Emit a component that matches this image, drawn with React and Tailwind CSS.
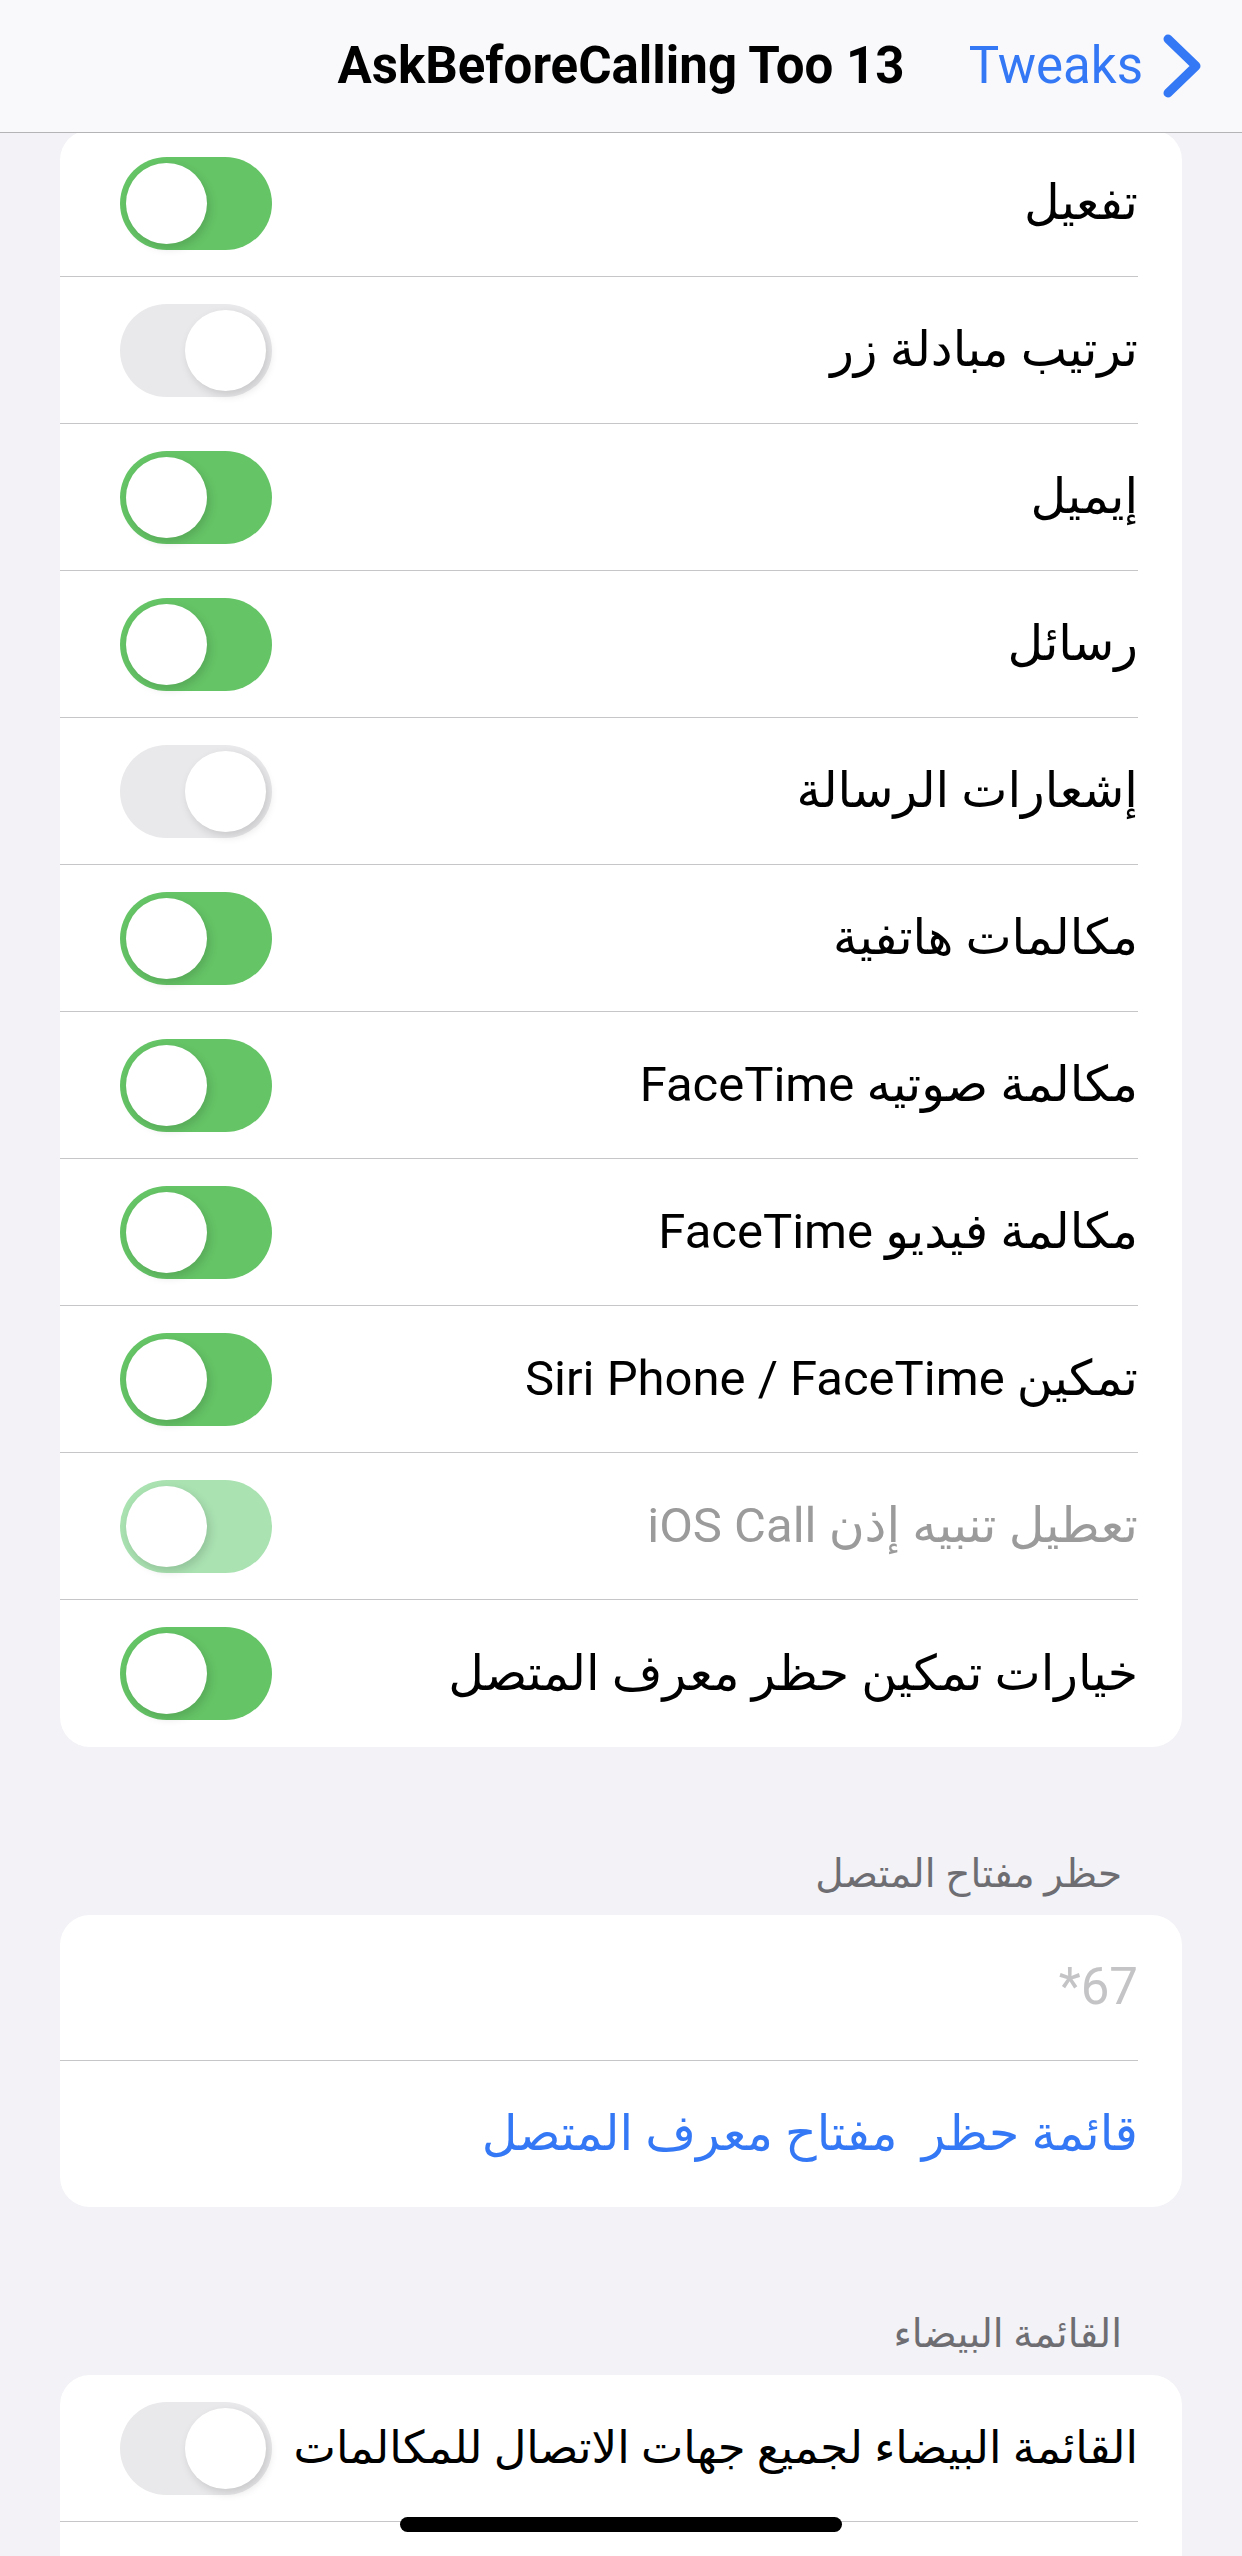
import React from 'react';

const mainRows = [
  { label: 'تفعيل', on: true },
  { label: 'ترتيب مبادلة زر', on: false },
  { label: 'إيميل', on: true },
  { label: 'رسائل', on: true },
  { label: 'إشعارات الرسالة', on: false },
  { label: 'مكالمات هاتفية', on: true },
  { label: 'مكالمة صوتيه FaceTime', on: true },
  { label: 'مكالمة فيديو FaceTime', on: true },
  { label: 'تمكين Siri Phone / FaceTime', on: true },
  { label: 'تعطيل تنبيه إذن iOS Call', on: true, disabled: true },
  { label: 'خيارات تمكين حظر معرف المتصل', on: true },
];

const Toggle = ({ on, disabled }) => {
  const track = on ? (disabled ? 'bg-[#aae2b2]' : 'bg-[#65c466]') : 'bg-[#e9e9eb]';
  return (
    <div
      dir="ltr"
      className={`flex h-[93px] w-[152px] shrink-0 items-center rounded-full px-[6px] ${track} ${on ? 'justify-start' : 'justify-end'}`}
    >
      <div className="h-[81px] w-[81px] rounded-full bg-white shadow-[3px_4px_10px_rgba(0,0,0,0.14)]" />
    </div>
  );
};

const Row = ({ children, last, height = 'h-[147px]' }) => (
  <div className="pr-[44px]">
    <div className={`flex ${height} items-center justify-between pl-[60px] ${last ? '' : 'border-b border-[#c6c6c8]'}`}>
      {children}
    </div>
  </div>
);

const SectionHeader = ({ children }) => (
  <div dir="rtl" className="flex h-[168px] items-end pb-[17px] pr-[60px]">
    <span className="text-[39px] leading-[47px] text-[#6d6d72]">{children}</span>
  </div>
);

const App = () => {
  return (
    <div className="relative h-[2556px] w-[1242px] overflow-hidden bg-[#f2f2f7] font-['Roboto','DejaVu_Sans',sans-serif]">
      {/* Nav bar */}
      <div className="relative z-10 grid h-[133px] grid-cols-[1fr_auto_1fr] items-center border-b border-[#b4b4b6] bg-[#f9f9fb]">
        <div />
        <h1 className="text-[51px] font-bold text-black">AskBeforeCalling Too 13</h1>
        <div className="flex items-center justify-end pr-[40px]">
          <span className="text-[51px] text-[#3478f6]">Tweaks</span>
          <svg className="ml-[19px] h-[64px] w-[40px]" viewBox="0 0 40 64" fill="none">
            <path d="M6 5 L34 32 L6 59" stroke="#3478f6" strokeWidth="9" strokeLinecap="round" strokeLinejoin="round" />
          </svg>
        </div>
      </div>

      <div className="px-[60px]">
        {/* Main toggles */}
        <div dir="rtl" className="-mt-[3px] overflow-hidden rounded-[30px] bg-white">
          {mainRows.map((row, i) => (
            <Row key={row.label} last={i === mainRows.length - 1}>
              <span className={`whitespace-nowrap text-[49px] ${row.disabled ? 'text-[#9b9b9b]' : 'text-black'}`}>{row.label}</span>
              <Toggle on={row.on} disabled={row.disabled} />
            </Row>
          ))}
        </div>

        {/* Caller ID block */}
        <SectionHeader>حظر مفتاح المتصل</SectionHeader>
        <div dir="rtl" className="overflow-hidden rounded-[30px] bg-white">
          <Row height="h-[146px]">
            <span dir="ltr" className="text-[51px] text-[#c4c4c6]">*67</span>
          </Row>
          <Row height="h-[146px]" last>
            <span className="whitespace-pre text-[49px] text-[#3478f6]">قائمة حظر  مفتاح معرف المتصل</span>
          </Row>
        </div>

        {/* White list */}
        <SectionHeader>القائمة البيضاء</SectionHeader>
        <div dir="rtl" className="overflow-hidden rounded-[30px] bg-white">
          <Row>
            <span className="whitespace-nowrap text-[45px] text-black">القائمة البيضاء لجميع جهات الاتصال للمكالمات</span>
            <Toggle on={false} />
          </Row>
          <Row last>
            <span />
          </Row>
        </div>
      </div>

      {/* Home indicator */}
      <div className="absolute bottom-[24px] left-1/2 h-[15px] w-[442px] -translate-x-1/2 rounded-full bg-black" />
    </div>
  );
};

export default App;
